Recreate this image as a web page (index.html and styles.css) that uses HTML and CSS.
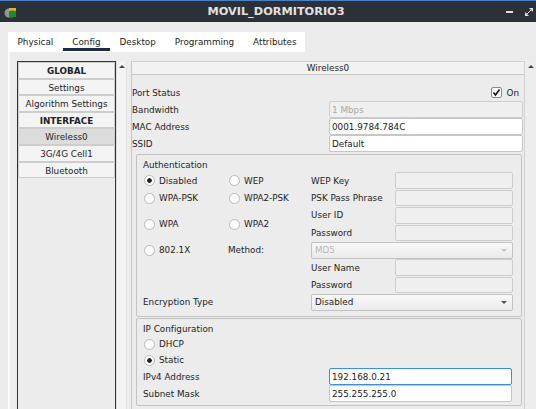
FILE: index.html
```html
<!DOCTYPE html>
<html lang="es">
<head>
    <meta charset="UTF-8">
    <meta name="viewport" content="width=device-width, initial-scale=1.0">
    <title>MOVIL_DORMITORIO3</title>
    <link rel="stylesheet" href="styles.css">
</head>
<body>
    <div class="titlebar">
        <div class="app-icon">
            <svg width="14" height="14" viewBox="0 0 14 14">
                <circle cx="5" cy="8" r="4.5" fill="#8e979c"/>
                <rect x="5" y="3" width="7" height="9" fill="#1f8a2c"/>
                <path d="M5 3 L12 3 L12 6 L8 5.5 L5 6 Z" fill="#e6b129"/>
                <path d="M7 12 L8 14 L9 12 Z" fill="#555"/>
            </svg>
        </div>
        <div class="title">MOVIL_DORMITORIO3</div>
        <div class="win-controls">
            <span class="minimize"></span>
            <svg class="maximize" width="8" height="8" viewBox="0 0 8 8">
                <path d="M4 0 L8 0 L8 4 Z M0 4 L0 8 L4 8 Z" fill="#e0e0e0"/>
                <path d="M1.5 6.5 L6.5 1.5" stroke="#e0e0e0" stroke-width="1"/>
            </svg>
        </div>
    </div>

    <div class="tabs">
        <div class="tab">Physical</div>
        <div class="tab active">Config</div>
        <div class="tab">Desktop</div>
        <div class="tab">Programming</div>
        <div class="tab">Attributes</div>
    </div>

    <div class="page">
        <div class="sidebar">
            <div class="list">
                <div class="item head">GLOBAL</div>
                <div class="item">Settings</div>
                <div class="item">Algorithm Settings</div>
                <div class="item head">INTERFACE</div>
                <div class="item selected">Wireless0</div>
                <div class="item">3G/4G Cell1</div>
                <div class="item">Bluetooth</div>
            </div>
            <div class="vscroll"></div>
        </div>

        <div class="panel">
            <div class="content">
                <div class="header">Wireless0</div>

                <div class="form">
                    <div class="row">
                        <span>Port Status</span>
                        <div class="check-cell">
                            <span class="checkbox">
                                <svg width="9" height="9" viewBox="0 0 9 9"><path d="M1.5 4.5 L3.5 7 L7.5 1.5" fill="none" stroke="#111" stroke-width="1.6"/></svg>
                            </span>
                            <span>On</span>
                        </div>
                    </div>
                    <div class="row">
                        <span>Bandwidth</span>
                        <input class="field" type="text" value="1 Mbps" disabled>
                    </div>
                    <div class="row">
                        <span>MAC Address</span>
                        <input class="field" type="text" value="0001.9784.784C">
                    </div>
                    <div class="row">
                        <span>SSID</span>
                        <input class="field" type="text" value="Default">
                    </div>
                </div>

                <div class="group auth">
                    <div class="group-title">Authentication</div>
                    <div class="auth-grid">
                        <span class="radio checked">Disabled</span>
                        <span class="radio">WEP</span>
                        <span>WEP Key</span>
                        <input class="field" type="text" disabled>

                        <span class="radio">WPA-PSK</span>
                        <span class="radio">WPA2-PSK</span>
                        <span>PSK Pass Phrase</span>
                        <input class="field" type="text" disabled>

                        <span class="radio span2">WPA</span>
                        <span class="radio span2">WPA2</span>
                        <span>User ID</span>
                        <input class="field" type="text" disabled>
                        <span>Password</span>
                        <input class="field" type="text" disabled>

                        <span class="radio">802.1X</span>
                        <span>Method:</span>
                        <div class="combo disabled wide">MD5</div>

                        <span class="col3">User Name</span>
                        <input class="field" type="text" disabled>
                        <span class="col3">Password</span>
                        <input class="field" type="text" disabled>

                        <span class="cols12">Encryption Type</span>
                        <div class="combo wide">Disabled</div>
                    </div>
                </div>

                <div class="group ip">
                    <div class="group-title">IP Configuration</div>
                    <div class="ip-grid">
                        <span class="radio opt">DHCP</span>
                        <span class="radio checked opt">Static</span>
                        <span>IPv4 Address</span>
                        <input class="field focus" type="text" value="192.168.0.21">
                        <span>Subnet Mask</span>
                        <input class="field" type="text" value="255.255.255.0">
                    </div>
                </div>
            </div>
            <div class="pscroll"></div>
        </div>
    </div>
</body>
</html>
```

FILE: styles.css
```css
body {
    margin: 0;
    width: 536px;
    height: 409px;
    overflow: hidden;
    background: #ececec;
    font-family: "DejaVu Sans", sans-serif;
    font-size: 8.8px;
    color: #232323;
}

/* title bar */
.titlebar {
    height: 22px;
    box-sizing: border-box;
    border-top: 1px solid #4b80c2;
    background: #2c3038;
    display: flex;
    align-items: center;
}
.app-icon {
    width: 52px;
    padding-left: 4px;
    box-sizing: border-box;
    display: flex;
}
.title {
    flex: 1;
    text-align: center;
    font-weight: bold;
    font-size: 11.3px;
    color: #e2e2e2;
}
.win-controls {
    width: 36px;
    display: flex;
    align-items: center;
}
.minimize {
    width: 7px;
    height: 2px;
    background: #e0e0e0;
    margin-left: 6px;
}
.maximize {
    margin-left: 12px;
}

/* tabs */
.tabs {
    margin: 10px 0 0 8px;
    width: 297px;
    height: 20px;
    background: #fff;
    display: flex;
}
.tab {
    padding: 0 9.5px;
    line-height: 20px;
    position: relative;
}
.tab.active::after {
    content: "";
    position: absolute;
    left: 0;
    right: 0;
    bottom: 1px;
    height: 3px;
    background: #1b2b45;
}

.page {
    margin-left: 8px;
    border-left: 2px solid #fafafa;
    padding: 9px 0 0 7px;
    height: 360px;
    display: flex;
}

/* left list */
.sidebar {
    display: flex;
}
.list {
    width: 99px;
    box-sizing: border-box;
    border: 1px solid #333;
    border-bottom: none;
}
.item {
    height: 16.6px;
    padding-top: 1px;
    line-height: 14px;
    box-sizing: border-box;
    border: 1px solid #cdcdcd;
    border-radius: 1px;
    background: #f4f4f4;
    text-align: center;
}
.item.head {
    font-weight: bold;
}
.item.selected {
    background: #dcdcdc;
}
.vscroll, .pscroll {
    box-sizing: border-box;
    background: #f3f3f3;
    border-left: 1px solid #dedede;
}
.vscroll {
    width: 11px;
    border-right: 1px solid #e2e2e2;
}
.pscroll {
    width: 12px;
    background: #ededed;
    border-left-color: #d2d2d2;
}
.vscroll::before, .pscroll::before {
    content: "";
    display: block;
    width: 0;
    margin: 4px auto 0;
    border-left: 3px solid transparent;
    border-right: 3px solid transparent;
    border-bottom: 3px solid #444;
}

/* right panel */
.panel {
    margin-left: 4px;
    flex: 1;
    display: flex;
    border-left: 1px solid #c4c4c4;
}
.content {
    flex: 1;
}
.header {
    height: 12px;
    line-height: 12px;
    text-align: center;
    background: #f2f2f2;
    border-top: 1px solid #d0d0d0;
    border-bottom: 1px solid #c6c6c6;
}
.form {
    padding-top: 9px;
}
.row {
    display: grid;
    grid-template-columns: 197px 1fr;
    height: 17px;
    align-items: center;
    margin-right: 1px;
}
.check-cell {
    justify-self: end;
    display: flex;
    align-items: center;
    gap: 5px;
    padding-right: 4px;
}
.checkbox {
    width: 11px;
    height: 11px;
    box-sizing: border-box;
    border: 1px solid #8a8a8a;
    border-radius: 2px;
    background: #fff;
    display: flex;
    align-items: center;
    justify-content: center;
}

.field {
    width: 100%;
    height: 16.6px;
    box-sizing: border-box;
    margin: 0;
    padding: 0 2px;
    border: 1px solid #c6c6c6;
    border-radius: 2px;
    background: #fff;
    font: inherit;
    color: #222;
    outline: none;
}
.field:disabled {
    background: #efefef;
    border-color: #cdcdcd;
    color: #a9a9a9;
}
.field.focus {
    border-color: #3d8ee0;
}

/* group boxes */
.group {
    margin: 2px 2px 0 4px;
    border: 1px solid #c3c3c3;
    border-radius: 2px;
    padding: 4px 7px 5px 6px;
}
.group.ip {
    margin-top: 1px;
    padding-bottom: 3px;
}
.group-title {
    line-height: 13px;
}
.auth-grid {
    display: grid;
    grid-template-columns: 85px 83px 84px 118px;
    grid-auto-rows: 17.4px;
    align-items: center;
}
.span2 {
    grid-row: span 2;
}
.col3 {
    grid-column: 3;
}
.cols12 {
    grid-column: 1 / 3;
}
.wide {
    grid-column: 3 / 5;
}
.ip-grid {
    display: grid;
    grid-template-columns: 186px 183px;
    grid-template-rows: 16px 16px 17px 17px;
    align-items: center;
}
.ip-grid .opt {
    grid-column: 1 / 3;
}

.radio {
    display: flex;
    align-items: center;
    gap: 4px;
}
.radio::before {
    content: "";
    width: 11px;
    height: 11px;
    margin-left: 1px;
    box-sizing: border-box;
    border: 1px solid #b9b9b9;
    border-radius: 50%;
    background: #fff;
}
.radio.checked::before {
    background: radial-gradient(circle, #222 0, #222 2px, #fff 2.6px);
}

.combo {
    height: 16.6px;
    box-sizing: border-box;
    border: 1px solid #c2c2c2;
    border-radius: 2px;
    background: linear-gradient(#f8f8f8, #ebebeb);
    display: flex;
    align-items: center;
    padding: 0 3px;
    position: relative;
}
.combo::after {
    content: "";
    position: absolute;
    right: 5px;
    top: 6px;
    border-left: 3px solid transparent;
    border-right: 3px solid transparent;
    border-top: 3px solid #555;
}
.combo.disabled {
    color: #b8b8b8;
}
.combo.disabled::after {
    border-top-color: #c4c4c4;
}
```
